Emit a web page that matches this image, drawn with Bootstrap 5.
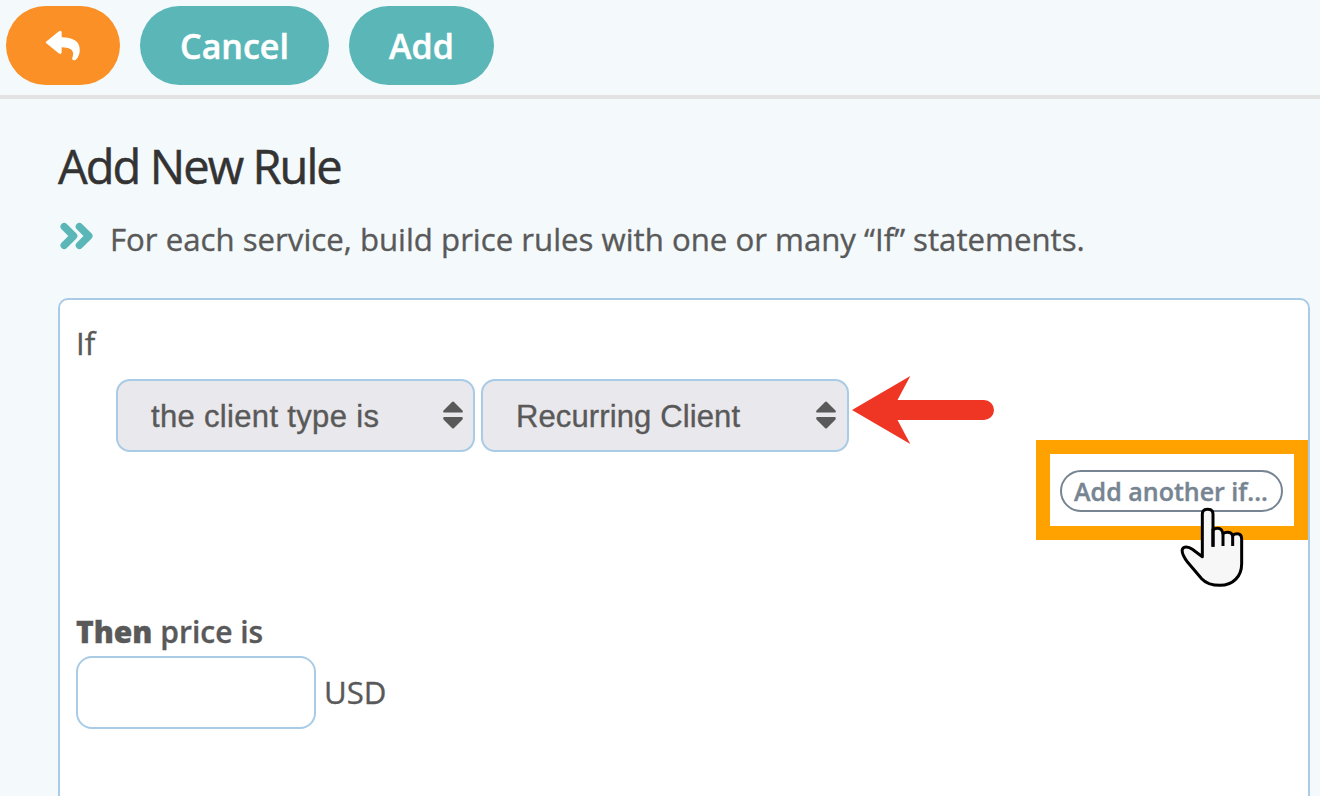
<!DOCTYPE html>
<html lang="en">
<head>
  <meta charset="UTF-8" />
  <meta name="viewport" content="width=device-width, initial-scale=1.0" />
  <title>Add New Rule</title>
  <link href="https://cdn.jsdelivr.net/npm/bootstrap@5.3.0/dist/css/bootstrap.min.css" rel="stylesheet">
  <style>
    body {
      background-color: #f4f9fc;
      color: #595959;
      font-family: "Open Sans", "Noto Sans", sans-serif;
      font-size: 31.2px;
      line-height: 44px;
      height: 796px;
      overflow: hidden;
      -webkit-text-stroke: .35px;
    }
    .top-bar {
      height: 99px;
      padding: 6px 6px 0;
      gap: 20px;
      border-bottom: 4px solid #e2e2e2;
    }
    .btn-pill {
      height: 79px;
      padding: 0;
      border: 0;
      border-radius: 40px;
      color: #fff;
      font-size: 34px;
      font-weight: 600;
      line-height: 79px;
      -webkit-text-stroke: .5px;
    }
    .btn-pill span { position: relative; top: 1px; }
    .btn-back { width: 114px; background-color: #fa9026; }
    .btn-cancel { width: 189px; background-color: #5ab6b7; }
    .btn-add { width: 145px; background-color: #5ab6b7; }
    .page-main { padding: 34px 10px 0 58px; }
    .page-title {
      color: #333;
      font-size: 47px;
      font-weight: 400;
      line-height: 66px;
      letter-spacing: -1.93px;
      -webkit-text-stroke: .5px;
    }
    .intro { height: 44px; margin-top: 18px; }
    .intro svg { margin: 5px 15px 0 2px; }
    .rule-card {
      height: 520px;
      margin-top: 37px;
      border: 2px solid #aacbe5;
      border-radius: 10px;
      padding: 21px 0 0 16px;
    }
    .select-row { margin: 14px 0 0 40px; gap: 6px; height: 73px; }
    .select-box {
      height: 73px;
      background-color: #e9e8ec;
      border: 2px solid #a9cbe6;
      border-radius: 14px;
      padding: 0 11px 0 33px;
      font-family: "Liberation Sans", Arial, sans-serif;
      font-size: 31px;
    }
    .select-box span { padding-top: 2px; }
    .select-box svg { margin-top: -1px; }
    .select-type { width: 359px; padding-right: 10.5px; letter-spacing: .33px; }
    .select-client { width: 368px; letter-spacing: .12px; }
    .red-arrow { margin: -12px 0 0 -3px; }
    .highlight {
      width: 272px;
      height: 100px;
      margin-top: -12px;
      border: 14px solid #ffa200;
      padding: 2px 2px 0 0;
    }
    .btn-another {
      width: 223px;
      height: 42px;
      padding: 0;
      border: 2px solid #778592;
      border-radius: 21px;
      color: #778592;
      font-size: 25px;
      font-weight: 600;
      line-height: 38px;
      white-space: nowrap;
      -webkit-text-stroke: .4px;
    }
    .hand-cursor { left: 130px; top: 52px; }
    .then-row { margin-top: 70px; font-size: 30px; font-weight: 600; }
    .then-row b { font-weight: 800; }
    .price-input {
      width: 240px;
      height: 73px;
      border: 2px solid #a9cbe6;
      border-radius: 16px;
      box-shadow: none;
    }
    .price-row { margin-top: 2px; gap: 8px; }
    .price-row span { padding-bottom: 2px; }
  </style>
</head>
<body>

<header class="top-bar d-flex align-items-start">
  <button class="btn btn-pill btn-back d-flex align-items-center justify-content-center" aria-label="Back">
    <svg width="36" height="32" viewBox="0 0 38 34" fill="#fff">
      <path d="M1.3 12.2 14.4 1.6Q17.6-.5 17.6 2.7V7.6C29 7.9 36.8 11.2 36.8 20.6 36.8 26.2 34.6 30 32.2 31.8 30.3 33 28 31.6 29 29.2 31.6 21.5 27.5 18.5 17.6 18.2V23.5Q17.4 26.7 14.4 24.6L1.3 14.2Q.1 13.2 1.3 12.2Z"/>
    </svg>
  </button>
  <button class="btn btn-pill btn-cancel"><span>Cancel</span></button>
  <button class="btn btn-pill btn-add"><span>Add</span></button>
</header>

<main class="page-main">
  <h1 class="page-title mb-0">Add New Rule</h1>
  <div class="intro d-flex align-items-start">
    <svg class="flex-shrink-0" width="35" height="28" viewBox="0 0 35 28" fill="none" stroke="#5ab6b7" stroke-width="7.4" stroke-linecap="round" stroke-linejoin="round">
      <path d="M4.2 4.7 13.6 14 4.2 23.3M19.4 4.7 28.8 14 19.4 23.3"/>
    </svg>
    <span class="text-nowrap">For each service, build price rules with one or many “If” statements.</span>
  </div>

  <section class="rule-card bg-white">
    <div>If</div>

    <div class="select-row d-flex align-items-center">
      <div class="select-box select-type d-flex align-items-center justify-content-between">
        <span>the client type is</span>
        <svg width="20" height="28" viewBox="0 0 20 28" fill="#595959"><path d="M9 1Q10 0 11 1L19.5 9.6Q20.5 11.5 18.5 11.5H1.5Q-.5 11.5.5 9.6ZM9 27Q10 28 11 27L19.5 18.4Q20.5 16 18.5 16H1.5Q-.5 16 .5 18.4Z"/></svg>
      </div>
      <div class="select-box select-client d-flex align-items-center justify-content-between">
        <span>Recurring Client</span>
        <svg width="20" height="28" viewBox="0 0 20 28" fill="#595959"><path d="M9 1Q10 0 11 1L19.5 9.6Q20.5 11.5 18.5 11.5H1.5Q-.5 11.5.5 9.6ZM9 27Q10 28 11 27L19.5 18.4Q20.5 16 18.5 16H1.5Q-.5 16 .5 18.4Z"/></svg>
      </div>
      <svg class="red-arrow" width="142" height="68" viewBox="0 0 142 68" fill="#ef3524">
        <path d="M0 34 58.3 0 45.5 24H132A10 10 0 0 1 132 44H45.5L58.3 68Z"/>
      </svg>
    </div>

    <div class="highlight bg-white ms-auto position-relative d-flex align-items-center justify-content-center">
      <button class="btn btn-another">Add another if...</button>
      <!-- hand pointer over the button -->
      <svg class="hand-cursor position-absolute" width="64" height="82" viewBox="480 228 192 246" fill="#f7f7f7" stroke="#000" stroke-width="9" stroke-linejoin="round">
        <path d="M579 350V252Q579 238 563 238 547 238 547 252V380L517 358C505 349 491 349 487 358 484 370 493 384 503 397L545 446C559 461 578 466 600 466 640 466 665 438 665 401V327Q665 311 652 311 643 311 638 316 634 307 623 307 614 307 609 311 606 295 593 295 585 295 579 300"/>
        <path d="M579 296V350M609 310V348M638 315V348"/>
      </svg>
    </div>

    <div class="then-row"><b>Then</b> price is</div>
    <div class="price-row d-flex align-items-center">
      <input type="text" class="form-control price-input" aria-label="Price">
      <span>USD</span>
    </div>
  </section>
</main>

<script src="https://cdn.jsdelivr.net/npm/bootstrap@5.3.0/dist/js/bootstrap.bundle.min.js"></script>
</body>
</html>
